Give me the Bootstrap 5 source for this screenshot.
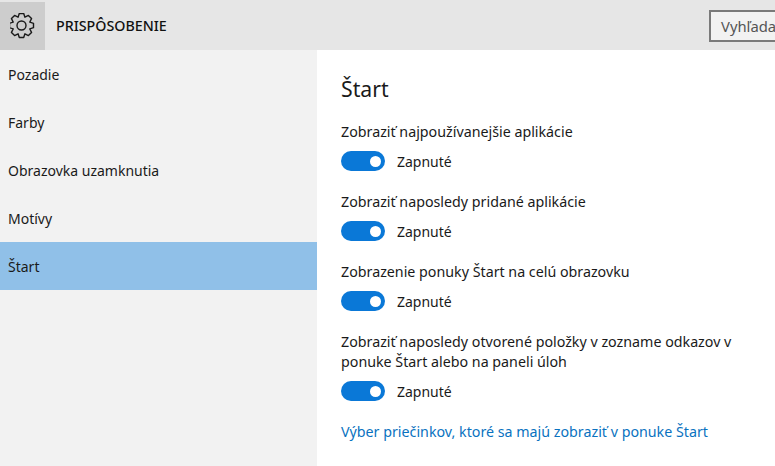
<!DOCTYPE html>
<html>

<head>
  <link href="https://cdn.jsdelivr.net/npm/bootstrap@5.3.2/dist/css/bootstrap.min.css" rel="stylesheet" type="text/css" />
  <script src="https://cdn.jsdelivr.net/npm/bootstrap@5.3.2/dist/js/bootstrap.bundle.min.js"></script>
  <style>
    html, body {
      height: 466px;
      overflow: hidden;
    }

    body {
      font-family: "Noto Sans", "Open Sans", sans-serif;
      font-size: 14px;
      color: #1a1a1a;
      background: #fff;
    }

    .top-bar {
      height: 50px;
      background: #e6e6e6;
      padding-top: 2px;
    }

    .gear-box {
      width: 45px;
      height: 48px;
      background: #cdcdcd;
    }

    .app-title {
      margin-left: 11px;
      font-size: 14.25px;
      font-weight: 500;
      color: #111;
    }

    .search-box {
      width: 66px;
      height: 32px;
      margin-left: auto;
      margin-top: 8px;
      border: 2px solid #7a7a7a;
      border-right: 0;
      background: #f2f2f2;
      padding-left: 10px;
      font-size: 14.8px;
      color: #555;
      white-space: nowrap;
    }

    .side-menu {
      width: 317px;
      height: 416px;
      background: #f2f2f2;
    }

    .side-link {
      display: flex;
      align-items: center;
      height: 48px;
      padding-left: 8px;
      color: #1a1a1a;
      text-decoration: none;
    }

    .side-link.is-active {
      background: #90c0e8;
    }

    .page-body {
      padding: 23px 0 0 24px;
    }

    .page-title {
      font-size: 21.2px;
      font-weight: 400;
      line-height: 32px;
      margin: 0 0 17px;
    }

    .opt-label {
      font-size: 14.25px;
      line-height: 20px;
      margin-bottom: 9px;
    }

    .opt-row {
      height: 20px;
      margin-bottom: 21px;
      gap: 12px;
    }

    .switch-on {
      position: relative;
      width: 44px;
      height: 20px;
      border-radius: 10px;
      background: #0a78d7;
    }

    .switch-on::after {
      content: "";
      position: absolute;
      top: 4.5px;
      right: 4.5px;
      width: 11px;
      height: 11px;
      border-radius: 50%;
      background: #fff;
    }

    .folders-link {
      display: block;
      font-size: 14.25px;
      color: #0a72c0;
      text-decoration: none;
      line-height: 20px;
    }
  </style>
</head>

<body>
  <header class="top-bar d-flex align-items-start">
    <div class="gear-box d-flex align-items-center justify-content-center">
      <svg width="26" height="26" viewBox="-11.5 -12.5 26 26" fill="none" stroke="#1a1a1a" stroke-width="1.4" stroke-linejoin="round">
        <circle cx="0" cy="0" r="4.5" />
        <path d="M-3.44 -8.31L-2.2 -12H2.2L3.44 -8.31L6.93 -10.04L10.04 -6.93L8.31 -3.44L12 -2.2V2.2L8.31 3.44L10.04 6.93L6.93 10.04L3.44 8.31L2.2 12H-2.2L-3.44 8.31L-6.93 10.04L-10.04 6.93L-8.31 3.44L-12 2.2V-2.2L-8.31 -3.44L-10.04 -6.93L-6.93 -10.04Z" />
      </svg>
    </div>
    <div class="app-title align-self-center">PRISPÔSOBENIE</div>
    <div class="search-box d-flex align-items-center">Vyhľada</div>
  </header>

  <div class="d-flex">
    <nav class="side-menu flex-shrink-0">
      <a class="side-link" href="#">Pozadie</a>
      <a class="side-link" href="#">Farby</a>
      <a class="side-link" href="#">Obrazovka uzamknutia</a>
      <a class="side-link" href="#">Motívy</a>
      <a class="side-link is-active" href="#">Štart</a>
    </nav>

    <main class="page-body flex-grow-1">
      <h1 class="page-title">Štart</h1>

      <div class="opt-label">Zobraziť najpoužívanejšie aplikácie</div>
      <div class="opt-row d-flex align-items-center"><span class="switch-on"></span><span>Zapnuté</span></div>

      <div class="opt-label">Zobraziť naposledy pridané aplikácie</div>
      <div class="opt-row d-flex align-items-center"><span class="switch-on"></span><span>Zapnuté</span></div>

      <div class="opt-label">Zobrazenie ponuky Štart na celú obrazovku</div>
      <div class="opt-row d-flex align-items-center"><span class="switch-on"></span><span>Zapnuté</span></div>

      <div class="opt-label">Zobraziť naposledy otvorené položky v zozname odkazov v<br>ponuke Štart alebo na paneli úloh</div>
      <div class="opt-row d-flex align-items-center"><span class="switch-on"></span><span>Zapnuté</span></div>

      <a class="folders-link" href="#">Výber priečinkov, ktoré sa majú zobraziť v ponuke Štart</a>
    </main>
  </div>
</body>

</html>
